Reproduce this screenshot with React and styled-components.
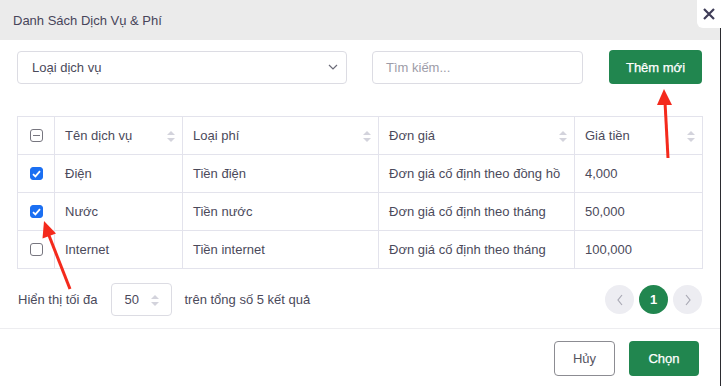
import React from 'react';
import styled, { createGlobalStyle } from 'styled-components';

const GlobalStyle = createGlobalStyle`
  html, body { margin: 0; padding: 0; background: #ffffff; }
  body { font-family: "Liberation Sans", Arial, sans-serif; }
  * { box-sizing: border-box; }
`;

const GREEN = '#21864f';
const TEXT = '#4b4a5b';
const LINE = '#e3e3ec';

const services = [
  { name: 'Điện', fee: 'Tiền điện', unit: 'Đơn giá cố định theo đồng hồ', price: '4,000', checked: true },
  { name: 'Nước', fee: 'Tiền nước', unit: 'Đơn giá cố định theo tháng', price: '50,000', checked: true },
  { name: 'Internet', fee: 'Tiền internet', unit: 'Đơn giá cố định theo tháng', price: '100,000', checked: false },
];

const SortIcon = () => (
  <SortSvg width="8" height="11" viewBox="0 0 8 11">
    <path d="M4 0 L8 4 L0 4 Z" fill="#d3d3dc" />
    <path d="M4 11 L8 7 L0 7 Z" fill="#d3d3dc" />
  </SortSvg>
);

const Chevron = ({ dir }) => {
  const d = dir === 'left' ? 'M6 1 L2 6 L6 11' : dir === 'right' ? 'M2 1 L6 6 L2 11' : 'M1 1 L5 5 L9 1';
  const w = dir === 'down' ? 10 : 8;
  const h = dir === 'down' ? 6 : 12;
  return (
    <svg width={w} height={h} viewBox={`0 0 ${w} ${h}`}>
      <path d={d} fill="none" stroke={dir === 'down' ? '#6b6b78' : '#a9a9b4'} strokeWidth="1.2" />
    </svg>
  );
};

const Check = ({ state }) => (
  <CheckBox $state={state}>
    {state === 'checked' && (
      <svg width="9" height="8" viewBox="0 0 9 8">
        <path d="M1 4.2 L3.4 6.4 L8 1.2" fill="none" stroke="#fff" strokeWidth="1.8" />
      </svg>
    )}
    {state === 'mixed' && <Dash />}
  </CheckBox>
);

export default function App() {
  return (
    <>
      <GlobalStyle />
      <Screen>
        <Modal>
          <Header>Danh Sách Dịch Vụ &amp; Phí</Header>
          <Body>
            <Toolbar>
              <SelectBox>
                <span>Loại dịch vụ</span>
                <Chevron dir="down" />
              </SelectBox>
              <SearchBox>Tìm kiếm...</SearchBox>
              <GreenButton $w={93}>Thêm mới</GreenButton>
            </Toolbar>

            <Table>
              <colgroup>
                <col style={{ width: 37 }} />
                <col style={{ width: 128 }} />
                <col style={{ width: 196 }} />
                <col style={{ width: 196 }} />
                <col style={{ width: 128 }} />
              </colgroup>
              <thead>
                <tr>
                  <CheckCell><Check state="mixed" /></CheckCell>
                  <Th>Tên dịch vụ<SortIcon /></Th>
                  <Th>Loại phí<SortIcon /></Th>
                  <Th>Đơn giá<SortIcon /></Th>
                  <Th>Giá tiền<SortIcon /></Th>
                </tr>
              </thead>
              <tbody>
                {services.map((s) => (
                  <tr key={s.name}>
                    <CheckCell><Check state={s.checked ? 'checked' : 'empty'} /></CheckCell>
                    <Td>{s.name}</Td>
                    <Td>{s.fee}</Td>
                    <Td>{s.unit}</Td>
                    <Td>{s.price}</Td>
                  </tr>
                ))}
              </tbody>
            </Table>

            <PagerRow>
              <PageSize>
                <span>Hiển thị tối đa</span>
                <NumberBox>
                  <span>50</span>
                  <SortIcon />
                </NumberBox>
                <span>trên tổng số 5 kết quả</span>
              </PageSize>
              <Pages>
                <PageDot><Chevron dir="left" /></PageDot>
                <PageDot $active>1</PageDot>
                <PageDot><Chevron dir="right" /></PageDot>
              </Pages>
            </PagerRow>
          </Body>
          <Footer>
            <OutlineButton>Hủy</OutlineButton>
            <GreenButton $w={70} $h={35}>Chọn</GreenButton>
          </Footer>
        </Modal>
        <Edge />
        <CloseButton>
          <svg width="12" height="12" viewBox="0 0 12 12">
            <path d="M1 1 L11 11 M11 1 L1 11" stroke="#3f3d58" strokeWidth="2.2" />
          </svg>
        </CloseButton>
        <Annotations width="721" height="386" viewBox="0 0 721 386">
          <line x1="668" y1="158" x2="665" y2="102" stroke="#f42a1c" strokeWidth="3" />
          <path d="M664 89 L672 105 L657 105 Z" fill="#f42a1c" />
          <line x1="70" y1="289" x2="48" y2="233" stroke="#f42a1c" strokeWidth="3" />
          <path d="M44 221 L56 233.5 L42.5 238.5 Z" fill="#f42a1c" />
        </Annotations>
      </Screen>
    </>
  );
}

const Screen = styled.div`
  position: relative;
  display: flex;
  width: 721px;
  height: 386px;
  overflow: hidden;
`;

const Modal = styled.div`
  width: 720px;
  display: flex;
  flex-direction: column;
  background: #fff;
  color: ${TEXT};
  font-size: 13px;
`;

const Edge = styled.div`
  width: 1px;
  background: #2b2b30;
`;

const Header = styled.div`
  height: 40px;
  display: flex;
  align-items: center;
  padding-left: 13px;
  background: #ebebeb;
  color: #47455a;
  font-size: 13px;
`;

const CloseButton = styled.div`
  position: absolute;
  top: 0;
  right: 0;
  width: 24px;
  height: 28px;
  display: flex;
  align-items: center;
  justify-content: center;
  background: #fff;
  border-bottom-left-radius: 6px;
`;

const Body = styled.div`
  padding: 10px 18px 0 17px;
`;

const Toolbar = styled.div`
  display: flex;
  align-items: center;
  height: 34px;
  gap: 25px;

  & > button { margin-left: 1px; }
`;

const Field = styled.div`
  height: 33px;
  display: flex;
  align-items: center;
  border: 1px solid #dcdce3;
  border-radius: 4px;
  background: #fff;
`;

const SelectBox = styled(Field)`
  width: 330px;
  justify-content: space-between;
  padding: 0 8px 0 14px;
  color: #4b4a5b;
`;

const SearchBox = styled(Field)`
  width: 211px;
  padding-left: 13px;
  color: #9d9ca8;
`;

const GreenButton = styled.button`
  width: ${({ $w }) => $w}px;
  height: ${({ $h }) => $h || 34}px;
  border: none;
  border-radius: 4px;
  background: ${GREEN};
  color: #fff;
  font-family: inherit;
  font-size: 13px;
  -webkit-text-stroke: 0.25px #fff;
`;

const OutlineButton = styled.button`
  width: 61px;
  height: 35px;
  border: 1px solid #8c8c92;
  border-radius: 4px;
  background: #fff;
  color: #55545f;
  font-family: inherit;
  font-size: 13px;
`;

const Table = styled.table`
  margin-top: 32px;
  width: 685px;
  border-collapse: collapse;
  table-layout: fixed;

  tr { height: 38px; }
`;

const Th = styled.th`
  position: relative;
  border: 1px solid ${LINE};
  padding: 0 10px;
  text-align: left;
  font-weight: normal;
  color: ${TEXT};
`;

const Td = styled.td`
  border: 1px solid ${LINE};
  padding: 0 10px;
  white-space: nowrap;
  color: ${TEXT};
`;

const CheckCell = styled.td`
  border: 1px solid ${LINE};
  padding: 0;
  text-align: center;
  vertical-align: middle;
  line-height: 0;
`;

const SortSvg = styled.svg`
  position: absolute;
  right: 7px;
  top: 14px;
`;

const CheckBox = styled.span`
  display: inline-flex;
  align-items: center;
  justify-content: center;
  width: 13px;
  height: 13px;
  border-radius: 3px;
  background: ${({ $state }) => ($state === 'checked' ? '#1b6ff2' : '#fff')};
  border: 1px solid ${({ $state }) => ($state === 'checked' ? '#1b6ff2' : '#77767f')};
`;

const Dash = styled.span`
  width: 7px;
  height: 1.5px;
  background: #77767f;
`;

const PagerRow = styled.div`
  display: flex;
  align-items: center;
  justify-content: space-between;
  margin-top: 14px;
  padding-left: 1px;
  height: 33px;
`;

const PageSize = styled.div`
  display: flex;
  align-items: center;
  gap: 13px;
  color: ${TEXT};
`;

const NumberBox = styled(Field)`
  position: relative;
  width: 61px;
  padding-left: 13px;

  svg { right: 12px; top: 11px; }
`;

const Pages = styled.div`
  display: flex;
  gap: 5px;
`;

const PageDot = styled.div`
  width: 29px;
  height: 29px;
  border-radius: 50%;
  display: flex;
  align-items: center;
  justify-content: center;
  background: ${({ $active }) => ($active ? GREEN : '#ededf2')};
  color: #fff;
  font-weight: bold;
  font-size: 13px;
`;

const Footer = styled.div`
  margin-top: 12px;
  border-top: 1px solid #ededf0;
  display: flex;
  justify-content: flex-end;
  gap: 14px;
  padding: 12px 21px 0 0;
`;

const Annotations = styled.svg`
  position: absolute;
  left: 0;
  top: 0;
  pointer-events: none;
`;
